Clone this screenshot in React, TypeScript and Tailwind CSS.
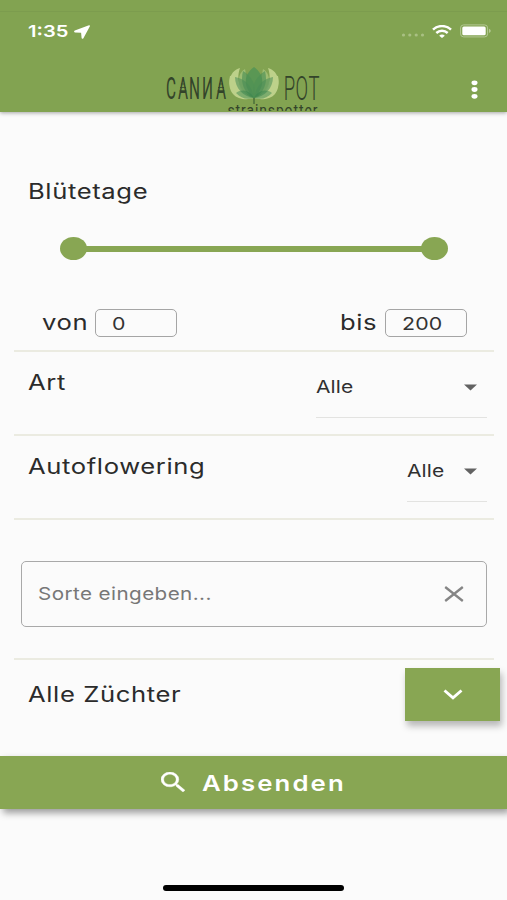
import { useState } from 'react';
import type { ReactNode } from 'react';

function StatusBar() {
  return (
    <div className="flex h-[49px] items-start justify-between border-t border-[#7c9c4e] pt-[11px] pr-[15px] pl-7">
      <div className="flex items-center">
        <span className="w-[46px] origin-left scale-x-[1.22] text-[16.5px] leading-[17px] font-semibold text-white">
          1:35
        </span>
        <svg width="16" height="14" viewBox="0 0 16 14" className="block">
          <path d="M15 .2.8 5.600C-.2 6-.2 7.300.9 7.400l6.200.4.5 5.200c.1 1 1.400 1 1.800.2L15.900 1.200C16.100.5 15.700 0 15 .2z" fill="#fff" />
        </svg>
      </div>
      <div className="mt-px flex items-center">
        <svg width="24" height="14" viewBox="0 0 24 14" className="mr-[7px]">
          <g fill="#a9c083">
            <circle cx="2.5" cy="11" r="1.6" />
            <circle cx="8.8" cy="11" r="1.6" />
            <circle cx="15.2" cy="11" r="1.6" />
            <circle cx="21.5" cy="11" r="1.6" />
          </g>
        </svg>
        <svg width="20" height="13" viewBox="0 0 20 13" className="mr-[8px]">
          <path d="M1 4.700C6-.1 14-.1 19 4.700" fill="none" stroke="#fff" strokeWidth="2.500" />
          <path d="M4.300 8c3.200-3 8.200-3 11.400 0" fill="none" stroke="#fff" strokeWidth="2.400" />
          <path d="M7.200 10.700c1.600-1.500 4-1.500 5.600 0L10 13z" fill="#fff" />
        </svg>
        <svg width="32" height="14" viewBox="0 0 32 14">
          <rect x="0.600" y="0.900" width="27" height="12" rx="3" fill="none" stroke="#b4c894" strokeWidth="1" />
          <rect x="2.300" y="2.500" width="23.400" height="8.800" rx="1.500" fill="#fff" />
          <path d="M29 4.800c2.300.8 2.300 3.400 0 4.200z" fill="#b4c894" />
        </svg>
      </div>
    </div>
  );
}

function Logo() {
  return (
    <svg width="165" height="51" viewBox="0 0 165 51" className="block">
      {/* Outer petals */}
      <g fill="#bdd18a">
        <path d="M80 8C68 11 67 27 73 34c5 6 15 6 21 4C82 34 75 22 80 8z" />
        <path d="M108 8c12 3 13 19 7 26-5 6-15 6-21 4 12-4 19-16 14-30z" />
        <path d="M70 16l5-1c-1 9 3 17 10 22l-8-1c-6-4-9-12-7-20zM118 16l-5-1c1 9-3 17-10 22l8-1c6-4 9-12 7-20z" />
      </g>
      <path d="M85 9c-7 4-8 14-3 23l8 3zM103 9c7 4 8 14 3 23l-8 3z" fill="#a5c37a" opacity="0.8" />
      {/* Inner petals */}
      <path d="M94 7c-10 7-12 19 0 31 12-12 10-24 0-31z" fill="#5a9754" />
      <path d="M83 11c-3 12 1 22 11 27 3-11-1-21-11-27z" fill="#4f9054" opacity="0.65" />
      <path d="M105 11c3 12-1 22-11 27-3-11 1-21 11-27z" fill="#4f9054" opacity="0.65" />
      <path d="M75 17c0 11 8 20 19 21-2-11-8-19-19-21z" fill="#488d55" opacity="0.55" />
      <path d="M113 17c0 11-8 20-19 21 2-11 8-19 19-21z" fill="#488d55" opacity="0.55" />
      <path d="M76 33c7-5 14-2 18 5-8 2-13 0-18-5zM112 33c-7-5-14-2-18 5 8 2 13 0 18-5z" fill="#31804c" opacity="0.45" />
      <path d="M94 38v6" stroke="#3d6335" strokeWidth="1.200" />
      <g fill="#33442a" fontFamily="Roboto, sans-serif" fontWeight="400">
        <text transform="translate(0 39) scale(.48 1)" fontSize="32" textAnchor="middle" x="23 48 72 99 127">
          CANИA
        </text>
        <text transform="translate(0 39.500) scale(.56 1)" fontSize="33" fontWeight="300" textAnchor="middle" x="231 253 275">
          POT
        </text>
        <text transform="translate(67.500 55.500) scale(.84 1)" fontSize="16.500" textLength="107" lengthAdjust="spacing">
          strainspotter
        </text>
      </g>
      <path d="M21 24h4M20 27.500h6M19.500 31h7M59 24h4M58 27.500h6M57.500 31h7" stroke="#33442a" strokeWidth="1.100" opacity="0.800" />
    </svg>
  );
}

function Header() {
  return (
    <header className="relative h-[112px] bg-[#82a351] pt-[11px] shadow-[0_1px_4px_rgba(0,0,0,0.35)]">
      <StatusBar />
      <div className="flex h-[51px] items-start justify-between pr-[29px] pl-40">
        <Logo />
        <button aria-label="Menu" className="mt-5">
          <svg width="7" height="20" viewBox="0 0 7 20" fill="#fff">
            <ellipse cx="3.500" cy="2.800" rx="3" ry="2.400" />
            <ellipse cx="3.500" cy="9.500" rx="3" ry="2.400" />
            <ellipse cx="3.500" cy="16.300" rx="3" ry="2.400" />
          </svg>
        </button>
      </div>
    </header>
  );
}

function Label({ children }: { children: ReactNode }) {
  return (
    <span className="block origin-left scale-x-[1.22] text-[21px] leading-6 tracking-[0.5px] whitespace-nowrap text-[#2b2b2b]">
      {children}
    </span>
  );
}

function NumberField({ value }: { value: string }) {
  return (
    <div className="flex h-7 w-[82px] items-center rounded-[5px] border border-[#a5a5a5] pt-0.5 pl-4">
      <span className="origin-left scale-x-[1.22] text-[17.5px] leading-5 tracking-[0.1px] text-[#333]">{value}</span>
    </div>
  );
}

function Select({ wide }: { wide?: boolean }) {
  return (
    <button
      className={
        (wide ? 'w-[171px]' : 'w-[80px]') +
        ' flex h-[49px] items-center justify-between border-b border-[#e3e3e1] pr-2.5 pb-3'
      }
    >
      <span className="origin-left scale-x-[1.2] text-[17.5px] leading-5 tracking-[0.1px] text-[#303030]">Alle</span>
      <svg width="13" height="7" viewBox="0 0 13 7">
        <path d="M0 .5h13L6.500 6.500z" fill="#626262" />
      </svg>
    </button>
  );
}

export default function App() {
  const [query, setQuery] = useState('');

  return (
    <div className="h-[900px] w-[507px] overflow-hidden bg-[#fbfbfb] font-['Inter','Liberation_Sans',sans-serif]">
      <Header />

      <main>
        {/* Flowering days */}
        <section className="mr-[13px] ml-3.5 h-60 border-b-2 border-[#ebebe1] pt-[68px]">
          <div className="pl-3.5">
            <Label>Blütetage</Label>
          </div>
          <div className="mt-[33px] ml-[46px] flex w-[388px] items-center">
            <div className="h-[23px] w-[27px] rounded-[50%] bg-[#88a653]" />
            <div className="-mx-1 h-1.5 flex-1 bg-[#88a653]" />
            <div className="h-[23px] w-[27px] rounded-[50%] bg-[#88a653]" />
          </div>
          <div className="mt-[49px] flex items-center pr-[27px] pl-7">
            <div className="w-[53px]">
              <Label>von</Label>
            </div>
            <NumberField value="0" />
            <div className="ml-auto w-[45px]">
              <Label>bis</Label>
            </div>
            <NumberField value="200" />
          </div>
        </section>

        <section className="mr-[13px] ml-3.5 flex h-[84px] justify-between border-b-2 border-[#ebebe1] pt-[17px] pr-[7px] pl-3.5">
          <div className="pt-0.5">
            <Label>Art</Label>
          </div>
          <Select wide />
        </section>

        <section className="mr-[13px] ml-3.5 flex h-[84px] justify-between border-b-2 border-[#ebebe1] pt-[17px] pr-[7px] pl-3.5">
          <div className="pt-0.5">
            <Label>Autoflowering</Label>
          </div>
          <Select />
        </section>

        {/* Strain search */}
        <section className="mr-[13px] ml-3.5 h-[140px] border-b-2 border-[#ebebe1] pt-[41px] pr-[7px] pl-[7px]">
          <div className="flex h-[66px] items-center justify-between rounded-[5px] border-[1.5px] border-[#a9a9a9] pr-[22px] pl-4">
            <input
              value={query}
              onChange={(e) => setQuery(e.target.value)}
              placeholder="Sorte eingeben..."
              className="w-[220px] origin-left scale-x-[1.18] bg-transparent text-[17.5px] tracking-[0.35px] outline-none placeholder:text-[#777]"
            />
            <button aria-label="Clear" onClick={() => setQuery('')}>
              <svg width="20" height="16" viewBox="0 0 20 16">
                <path d="M1.200 1 18.800 15M18.800 1 1.200 15" stroke="#858585" strokeWidth="2.300" />
              </svg>
            </button>
          </div>
        </section>

        {/* Breeders */}
        <section className="flex h-24 items-start justify-between pt-2 pr-[7px] pl-7">
          <div className="pt-[15px]">
            <Label>Alle Züchter</Label>
          </div>
          <button
            aria-label="Expand"
            className="flex h-[53px] w-[95px] items-center justify-center bg-[#88a653] shadow-[2px_5px_7px_rgba(0,0,0,0.28)]"
          >
            <svg width="20" height="12" viewBox="0 0 20 12">
              <path d="M1.500 1.500 10 8.800l8.500-7.300" fill="none" stroke="#fff" strokeWidth="2.900" />
            </svg>
          </button>
        </section>

        <button className="flex h-[53px] w-full items-center bg-[#88a653] pl-[161px] shadow-[3px_4px_7px_rgba(0,0,0,0.38)]">
          <svg width="24" height="20" viewBox="3 3 17.500 17.500" preserveAspectRatio="none" className="-mt-0.5">
            <path
              d="M15.500 14h-.79l-.28-.27A6.471 6.471 0 0 0 16 9.500 6.500 6.500 0 1 0 9.500 16c1.610 0 3.090-.59 4.230-1.570l.27.28v.79l5 4.990L20.490 19l-4.990-5zm-6 0C7.010 14 5 11.990 5 9.500S7.010 5 9.500 5 14 7.010 14 9.500 11.990 14 9.500 14z"
              fill="#fff"
              stroke="#fff"
              strokeWidth="0.300"
            />
          </svg>
          <span className="ml-[17px] origin-left scale-x-[1.17] text-[22px] leading-6 font-semibold tracking-[1.8px] text-white">
            Absenden
          </span>
        </button>
      </main>

      {/* Home indicator */}
      <div className="mx-auto mt-[76px] h-1.5 w-[181px] rounded-full bg-black" />
    </div>
  );
}
